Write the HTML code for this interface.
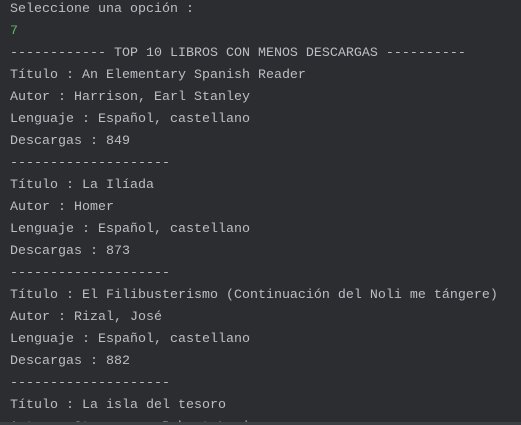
<!DOCTYPE html>
<html><head><meta charset="utf-8"><style>
html,body{margin:0;padding:0;background:#2b2d30;width:521px;height:425px;overflow:hidden;position:relative}
pre{margin:0;position:absolute;left:10px;top:-1px;font-family:"Liberation Mono",monospace;font-size:13.33px;line-height:22px;color:#bcbec4}
.g{color:#5fb865}
.bar{position:absolute;left:0;top:422px;width:521px;height:3px;background:#3c3f44}
</style></head><body>
<pre>Seleccione una opción :
<span class="g">7</span>
------------ TOP 10 LIBROS CON MENOS DESCARGAS ----------
Título : An Elementary Spanish Reader
Autor : Harrison, Earl Stanley
Lenguaje : Español, castellano
Descargas : 849
--------------------
Título : La Ilíada
Autor : Homer
Lenguaje : Español, castellano
Descargas : 873
--------------------
Título : El Filibusterismo (Continuación del Noli me tángere)
Autor : Rizal, José
Lenguaje : Español, castellano
Descargas : 882
--------------------
Título : La isla del tesoro
Autor : Stevenson, Robert Louis</pre>
<div class="bar"></div>
</body></html>
